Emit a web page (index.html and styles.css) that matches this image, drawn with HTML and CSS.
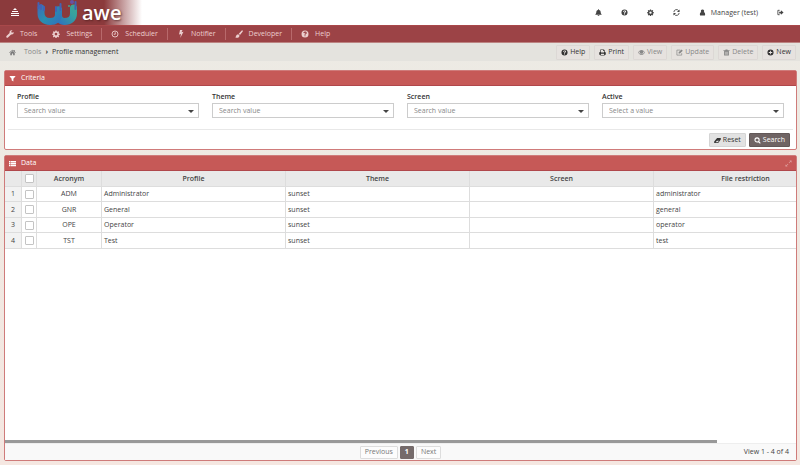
FILE: index.html
```html
<!DOCTYPE html>
<html lang="en">
<head>
    <meta charset="UTF-8">
    <meta name="viewport" content="width=device-width, initial-scale=1.0">
    <title>AWE - Profile management</title>
    <link rel="stylesheet" href="styles.css">
</head>
<body>

<!-- Icon set -->
<svg class="sprite" aria-hidden="true">
    <symbol id="i-menu" viewBox="0 0 8 9"><path d="M4 0l2 2H2zM1 3h6v1H1zM0 5h8v1H0zM0 7h8v1H0z"/></symbol>
    <symbol id="i-bell" viewBox="0 0 16 16"><path d="M8 0a1 1 0 0 1 1 1v1c3 .5 4 2.500 4 5 0 3 1 4.500 2.500 6h-15C2 11.500 3 10 3 7c0-2.500 1-4.500 4-5V1a1 1 0 0 1 1-1zM6 14h4a2 2 0 0 1-4 0z"/></symbol>
    <symbol id="i-question" viewBox="0 0 16 16"><path fill-rule="evenodd" d="M8 1a7 7 0 1 1 0 14A7 7 0 0 1 8 1zM7 10.500v2h2v-2zM4.500 5.500l1.700 1.200C7 5.500 7.500 5.300 8 5.300c1 0 1.400.8.8 1.400C8 7.400 7 7.800 7 9.500h2c0-1.200 2.500-1.500 2.500-3.700C11.500 4.200 10 3.200 8.200 3.200c-1.700 0-2.800.8-3.700 2.300z"/></symbol>
    <symbol id="i-cog" viewBox="0 0 16 16"><path fill-rule="evenodd" d="M6.800 1h2.400l.4 2 1.300.6 1.700-1.200 1.700 1.700-1.200 1.700.6 1.200 2 .4v2.300l-2 .4-.6 1.300 1.200 1.700-1.700 1.700-1.700-1.200-1.300.6-.4 2H6.800l-.4-2-1.300-.6-1.700 1.200-1.700-1.700 1.200-1.700-.6-1.300-2-.4V7.400l2-.4.6-1.200-1.200-1.700 1.700-1.700 1.700 1.200L6.400 3zM8 5.500a2.700 2.700 0 1 0 0 5.400 2.700 2.700 0 0 0 0-5.400z"/></symbol>
    <symbol id="i-refresh" viewBox="0 0 16 16"><path d="M2 7a6 6 0 0 1 11-3M14 9a6 6 0 0 1-11 3" fill="none" stroke="currentColor" stroke-width="2"/><path d="M15 1v6H9zM1 15V9h6z"/></symbol>
    <symbol id="i-user" viewBox="0 0 16 16"><path d="M8 1a3.700 3.700 0 0 1 3 6C13.500 8 14 10 14 13c0 1.300-1 2-2 2H4c-1 0-2-.7-2-2 0-3 .5-5 3-6a3.700 3.700 0 0 1 3-6z"/></symbol>
    <symbol id="i-signout" viewBox="0 0 16 16"><path d="M6 3H2v10h4" fill="none" stroke="currentColor" stroke-width="2"/><path d="M9 3l6 5-6 5v-3H5V6h4z"/></symbol>
    <symbol id="i-wrench" viewBox="0 0 16 16"><path d="M15 4l-3 1.500L10.500 4V3L13 .8C9.500-.3 6.500 2 7.200 5.800L1 12c-1.500 2 1 4.500 3 3l6.200-6.200C14 9.500 16 7 15 4z"/></symbol>
    <symbol id="i-clock" viewBox="0 0 16 16"><path d="M8 2a6 6 0 1 1 0 12A6 6 0 0 1 8 2zM8.500 4.500v4H5.500" fill="none" stroke="currentColor" stroke-width="1.800"/></symbol>
    <symbol id="i-bolt" viewBox="0 0 16 16"><path d="M6 0h5L9 4.500l4-.8L6.500 16l1.500-8-4 1z"/></symbol>
    <symbol id="i-brush" viewBox="0 0 16 16"><path d="M14 .5c1.500 0 2 1.200 1.500 2.500L10 10 7.500 7.500zM6.500 8.500L9 11c0 4-4.500 6-8.500 3.500 2-.8 1-5 6-6z"/></symbol>
    <symbol id="i-home" viewBox="0 0 16 16"><path d="M8 1.500l3 2.700V2.500h2v3.400L15.500 8.200l-1 1L8 3.600 1.500 9.200l-1-1zM8 4.800l5 4.200v5.500H9.500v-4h-3v4H3V9z"/></symbol>
    <symbol id="i-print" viewBox="0 0 16 16"><path fill-rule="evenodd" d="M3 1h8l2 2v4c1.500 0 2.500.8 2.500 2v4H13v2H3v-2H.5V9c0-1.200 1-2 2.500-2zM4.500 2.500V8h7V4.500h-2v-2zM4.500 11v2.500h7V11z"/></symbol>
    <symbol id="i-eye" viewBox="0 0 16 16"><path fill-rule="evenodd" d="M8 2.500c3.500 0 6 2.500 7.500 5.500-1.500 3-4 5.500-7.500 5.500S2 11 .5 8C2 5 4.500 2.500 8 2.500zM4.500 5C3.500 5.800 2.700 6.800 2 8c1.300 2.400 3.400 4 6 4s4.700-1.600 6-4c-.7-1.200-1.500-2.200-2.500-3A4 4 0 1 1 4.500 5z"/></symbol>
    <symbol id="i-edit" viewBox="0 0 16 16"><path d="M10 2.500H2v11.500h11V9.500" fill="none" stroke="currentColor" stroke-width="1.600"/><path d="M12.500 1l3 3L9 10.500H6v-3z"/></symbol>
    <symbol id="i-trash" viewBox="0 0 16 16"><path fill-rule="evenodd" d="M6 1h4l1 2h4v1.500h-1.500V15h-11V4.500H1V3h4zM5 6v7h1V6zM7.500 6v7h1V6zM10 6v7h1V6z"/></symbol>
    <symbol id="i-plus" viewBox="0 0 16 16"><path fill-rule="evenodd" d="M8 1a7 7 0 1 1 0 14A7 7 0 0 1 8 1zM7 4v3H4v2h3v3h2V9h3V7H9V4z"/></symbol>
    <symbol id="i-filter" viewBox="0 0 16 16"><path d="M1.500 2h13v1.500L10 8.500V15l-4-3V8.500L1.500 3.500z"/></symbol>
    <symbol id="i-eraser" viewBox="0 0 16 16"><path fill-rule="evenodd" d="M7 2.500h8.500v3L9.500 13.500H.5v-3zM6.500 8.500L3.500 12h5l3-3.500z"/></symbol>
    <symbol id="i-search" viewBox="0 0 16 16"><path d="M7 2a4.800 4.800 0 1 1 0 9.600A4.800 4.800 0 0 1 7 2zM10.500 10.500l4 4" fill="none" stroke="currentColor" stroke-width="2.400"/></symbol>
    <symbol id="i-list" viewBox="0 0 16 16"><path d="M0 2h3v3H0zM4 2h12v3H4zM0 6.500h3v3H0zM4 6.500h12v3H4zM0 11h3v3H0zM4 11h12v3H4z"/></symbol>
    <symbol id="i-expand" viewBox="0 0 16 16"><path d="M10 1h5v5l-2-2-3.500 3.500-1-1L12 3zM1 10l2 2 3.500-3.500 1 1L4 13l2 2H1z"/></symbol>
</svg>

<header class="topbar">
    <button class="menu-toggle" aria-label="Toggle menu"><svg class="icon"><use href="#i-menu"/></svg></button>
    <a class="brand" href="#">
        <svg class="brand-mark" viewBox="0 0 42 25" aria-hidden="true">
            <defs>
                <linearGradient id="mark-left" gradientUnits="userSpaceOnUse" x1="2" y1="4" x2="24" y2="22">
                    <stop offset="0" stop-color="#3f68b8"/>
                    <stop offset=".5" stop-color="#2a8fae"/>
                    <stop offset="1" stop-color="#2f74bd"/>
                </linearGradient>
                <linearGradient id="mark-right" gradientUnits="userSpaceOnUse" x1="22" y1="22" x2="40" y2="4">
                    <stop offset="0" stop-color="#2f74bd"/>
                    <stop offset=".6" stop-color="#359f9f"/>
                    <stop offset="1" stop-color="#43a58f"/>
                </linearGradient>
            </defs>
            <path d="M22.500 10v5c0 4 2 6.500 6 6.500 5.500 0 9-3 9-8V8" fill="none" stroke="url(#mark-right)" stroke-width="7" stroke-linecap="round"/>
            <path d="M5 8v5c0 5 3 8.500 9 8.500 5.500 0 8.500-2.500 8.500-7V10" fill="none" stroke="url(#mark-left)" stroke-width="7" stroke-linecap="round"/>
            <path d="M2.500 3v5M5 5v4M8 7v3M20 7v4M24.500 4v6M39.500 2v7" fill="none" stroke="#4263b4" stroke-width="2" stroke-linecap="round"/>
            <circle cx="36" cy="2" r="2" fill="#6752a5"/>
            <circle cx="33" cy="6" r="1" fill="#43a58f"/>
        </svg>
        <span class="brand-name">awe</span>
    </a>
    <nav class="user-tools" aria-label="User">
        <button aria-label="Notifications"><svg class="icon"><use href="#i-bell"/></svg></button>
        <button aria-label="Help"><svg class="icon"><use href="#i-question"/></svg></button>
        <button aria-label="Settings"><svg class="icon"><use href="#i-cog"/></svg></button>
        <button aria-label="Refresh"><svg class="icon"><use href="#i-refresh"/></svg></button>
        <a class="user" href="#"><svg class="icon"><use href="#i-user"/></svg>Manager (test)</a>
        <button aria-label="Log out"><svg class="icon"><use href="#i-signout"/></svg></button>
    </nav>
</header>

<nav class="main-menu" aria-label="Main">
    <a href="#"><svg class="icon"><use href="#i-wrench"/></svg>Tools</a>
    <a href="#"><svg class="icon"><use href="#i-cog"/></svg>Settings</a>
    <a class="divided" href="#"><svg class="icon"><use href="#i-clock"/></svg>Scheduler</a>
    <a class="divided" href="#"><svg class="icon"><use href="#i-bolt"/></svg>Notifier</a>
    <a class="divided" href="#"><svg class="icon"><use href="#i-brush"/></svg>Developer</a>
    <a class="divided" href="#"><svg class="icon"><use href="#i-question"/></svg>Help</a>
</nav>

<div class="page-bar">
    <div class="breadcrumb">
        <svg class="icon home"><use href="#i-home"/></svg>
        <a href="#">Tools</a>
        <b>›</b>
        <span>Profile management</span>
    </div>
    <div class="actions">
        <button class="btn"><svg class="icon"><use href="#i-question"/></svg>Help</button>
        <button class="btn"><svg class="icon"><use href="#i-print"/></svg>Print</button>
        <button class="btn" disabled><svg class="icon"><use href="#i-eye"/></svg>View</button>
        <button class="btn" disabled><svg class="icon"><use href="#i-edit"/></svg>Update</button>
        <button class="btn" disabled><svg class="icon"><use href="#i-trash"/></svg>Delete</button>
        <button class="btn"><svg class="icon"><use href="#i-plus"/></svg>New</button>
    </div>
</div>

<main class="content">
    <!-- Criteria -->
    <section class="panel">
        <h2 class="panel-title"><svg class="icon"><use href="#i-filter"/></svg>Criteria</h2>
        <form>
            <div class="criteria">
                <div class="field">
                    <label for="profile">Profile</label>
                    <div class="select"><select id="profile"><option>Search value</option></select></div>
                </div>
                <div class="field">
                    <label for="theme">Theme</label>
                    <div class="select"><select id="theme"><option>Search value</option></select></div>
                </div>
                <div class="field">
                    <label for="screen">Screen</label>
                    <div class="select"><select id="screen"><option>Search value</option></select></div>
                </div>
                <div class="field">
                    <label for="active">Active</label>
                    <div class="select"><select id="active"><option>Select a value</option></select></div>
                </div>
            </div>
            <div class="form-buttons">
                <button class="btn btn-reset" type="reset"><svg class="icon"><use href="#i-eraser"/></svg>Reset</button>
                <button class="btn btn-primary" type="button"><svg class="icon"><use href="#i-search"/></svg>Search</button>
            </div>
        </form>
    </section>

    <!-- Data grid -->
    <section class="panel panel-data">
        <h2 class="panel-title">
            <svg class="icon"><use href="#i-list"/></svg>Data
            <button class="expand" aria-label="Maximize"><svg class="icon"><use href="#i-expand"/></svg></button>
        </h2>
        <div class="grid-view">
            <table class="grid">
                <colgroup>
                    <col class="col-number">
                    <col class="col-check">
                    <col class="col-acronym">
                    <col class="col-wide">
                    <col class="col-wide">
                    <col class="col-wide">
                    <col class="col-wide">
                </colgroup>
                <thead>
                    <tr>
                        <th></th>
                        <th><input type="checkbox" aria-label="Select all"></th>
                        <th>Acronym</th>
                        <th>Profile</th>
                        <th>Theme</th>
                        <th>Screen</th>
                        <th>File restriction</th>
                    </tr>
                </thead>
                <tbody>
                    <tr><td class="number">1</td><td class="check"><input type="checkbox" aria-label="Select ADM"></td><td class="center">ADM</td><td>Administrator</td><td>sunset</td><td></td><td>administrator</td></tr>
                    <tr><td class="number">2</td><td class="check"><input type="checkbox" aria-label="Select GNR"></td><td class="center">GNR</td><td>General</td><td>sunset</td><td></td><td>general</td></tr>
                    <tr><td class="number">3</td><td class="check"><input type="checkbox" aria-label="Select OPE"></td><td class="center">OPE</td><td>Operator</td><td>sunset</td><td></td><td>operator</td></tr>
                    <tr><td class="number">4</td><td class="check"><input type="checkbox" aria-label="Select TST"></td><td class="center">TST</td><td>Test</td><td>sunset</td><td></td><td>test</td></tr>
                </tbody>
            </table>
        </div>
        <div class="scroll-track"><div class="scroll-thumb"></div></div>
        <footer class="pager">
            <div class="pages">
                <button>Previous</button>
                <button class="current">1</button>
                <button>Next</button>
            </div>
            <span class="summary">View 1 - 4 of 4</span>
        </footer>
    </section>
</main>

</body>
</html>
```

FILE: styles.css
```css
* {
    box-sizing: border-box;
}

body {
    font-family: "Open Sans", "Noto Sans", sans-serif;
    font-size: 7px;
    line-height: 10px;
    color: #444;
    margin: 0;
    min-height: 100vh;
    display: flex;
    flex-direction: column;
    background: linear-gradient(#ebebe5, #efe9e2 35%, #f5e7e1);
}

a {
    color: inherit;
    text-decoration: none;
}

button,
input,
select {
    font: inherit;
    color: inherit;
    margin: 0;
}

button {
    padding: 0;
    border: none;
    background: none;
    cursor: pointer;
}

.sprite {
    display: none;
}

.icon {
    width: 7px;
    height: 7px;
    flex: none;
    fill: currentColor;
}

/* Top bar */
.topbar {
    display: flex;
    align-items: center;
    height: 25px;
    background: linear-gradient(90deg, #8b3a3c 0, #8b3a3c 104px, #fff 142px);
}

.menu-toggle {
    display: flex;
    justify-content: center;
    width: 30px;
    color: #fff;
}

.menu-toggle .icon {
    width: 8px;
    height: 9px;
}

.brand {
    display: flex;
    align-items: center;
    gap: 4px;
    padding-left: 6px;
}

.brand-mark {
    width: 42px;
    height: 25px;
}

.brand-name {
    font-size: 20px;
    font-weight: 600;
    line-height: 24px;
    color: #fff;
    text-shadow: 1px 1px 2px rgba(60, 20, 20, 0.6);
}

.user-tools {
    display: flex;
    align-items: center;
    gap: 19px;
    margin-left: auto;
    padding-right: 16px;
    color: #444;
}

.user-tools button,
.user {
    display: flex;
    align-items: center;
}

.user {
    gap: 5px;
}

/* Main menu */
.main-menu {
    display: flex;
    align-items: center;
    height: 18px;
    color: #eccfcf;
    background: #9c4346;
    border-top: 1px solid #a9484a;
    border-bottom: 1px solid #bc8482;
}

.main-menu a {
    display: flex;
    align-items: center;
    gap: 6px;
    height: 12px;
    padding: 0 9px 0 6px;
}

.main-menu .divided {
    padding: 0 9px;
    border-left: 1px solid #b8696b;
}

.main-menu .icon {
    width: 8px;
    height: 8px;
}

/* Breadcrumb and page actions */
.page-bar {
    display: flex;
    align-items: center;
    justify-content: space-between;
    height: 18px;
    padding: 0 4px 0 9px;
    background: #e4e3de;
}

.breadcrumb {
    display: flex;
    align-items: center;
    gap: 4px;
    color: #333;
}

.breadcrumb a {
    color: #888;
}

.home {
    margin-right: 4px;
    color: #777;
}

.actions {
    display: flex;
    gap: 4px;
}

.btn {
    display: flex;
    align-items: center;
    gap: 2px;
    height: 15px;
    padding: 0 4px;
    color: #333;
    background: #e6e2df;
    border: 1px solid #dcd8d5;
    border-radius: 1px;
}

.btn:disabled {
    color: #888;
    cursor: default;
}

.btn-reset {
    background: #e2e2e2;
    border-color: #d4d4d4;
}

.btn-primary {
    color: #fff;
    background: #6f6464;
    border-color: #625858;
}

/* Panels */
.content {
    flex: 1;
    display: flex;
    flex-direction: column;
    gap: 5px;
    padding: 9px 3px 4px 4px;
}

.panel {
    background: #fff;
    border: 1px solid #cf7b7a;
    border-radius: 2px;
}

.panel-title {
    display: flex;
    align-items: center;
    gap: 5px;
    height: 15px;
    margin: 0;
    padding: 0 4px;
    font-size: 7px;
    font-weight: 400;
    color: #fff;
    background: #c65957;
    border-bottom: 1px solid #b0474b;
}

.expand {
    display: flex;
    margin-left: auto;
    color: #dfa09f;
}

.criteria {
    display: grid;
    grid-template-columns: repeat(4, 1fr);
    gap: 13px;
    margin: 0 3px;
    padding: 6px 9px 11px;
    border-bottom: 1px solid #e8e8e8;
}

.field label {
    display: block;
    font-weight: 600;
    color: #333;
}

.select {
    position: relative;
    margin-top: 1px;
}

.select select {
    display: block;
    width: 100%;
    height: 15px;
    padding: 0 6px;
    color: #888;
    background: #fff;
    border: 1px solid #ccc;
    border-radius: 0;
    appearance: none;
}

/* Dropdown arrow */
.select::after {
    content: "";
    position: absolute;
    top: 7px;
    right: 5px;
    border: 3px solid transparent;
    border-top-color: #444;
    border-bottom: none;
    pointer-events: none;
}

.form-buttons {
    display: flex;
    justify-content: flex-end;
    gap: 3px;
    padding: 3px 6px 2px;
}

.form-buttons .btn {
    height: 14px;
}

/* Data grid */
.panel-data {
    flex: 1;
    display: flex;
    flex-direction: column;
}

.grid-view {
    flex: 1;
    width: 100%;
    overflow: hidden;
}

.grid {
    width: 833px;
    table-layout: fixed;
    border-collapse: separate;
    border-spacing: 0;
}

.col-number {
    width: 17px;
}

.col-check {
    width: 15px;
}

.col-acronym {
    width: 65px;
}

.col-wide {
    width: 184px;
}

.grid th,
.grid td {
    height: 15px;
    padding: 0 2px;
    text-align: left;
    border-right: 1px solid #ddd;
    border-bottom: 1px solid #ddd;
}

.grid th {
    height: 16px;
    font-weight: 600;
    text-align: center;
    background: #e9e9e9;
}

.grid tr:nth-child(even) td {
    height: 16px;
}

.grid .number {
    text-align: center;
    background: #f2f2f2;
}

.grid .center {
    text-align: center;
}

.grid input {
    display: block;
    width: 9px;
    height: 9px;
    margin: 0 auto;
    background: #fff;
    border: 1px solid #c4c4c4;
    border-radius: 1px;
    appearance: none;
}

.scroll-track {
    height: 4px;
    background: linear-gradient(#fff 3px, #eee 3px);
}

.scroll-thumb {
    width: 90%;
    height: 3px;
    background: #999;
}

/* Pager */
.pager {
    display: grid;
    grid-template-columns: 1fr auto 1fr;
    align-items: center;
    height: 16px;
    background: #f9f9f9;
}

.pages {
    grid-column: 2;
    display: flex;
    gap: 2px;
}

.pages button {
    height: 13px;
    padding: 0 4px;
    color: #777;
    background: #fcfcfc;
    border: 1px solid #ddd;
    border-radius: 1px;
}

.pages .current {
    color: #fff;
    font-weight: 700;
    background: #756b6b;
    border-color: #756b6b;
}

.summary {
    justify-self: end;
    padding-right: 7px;
}
```
